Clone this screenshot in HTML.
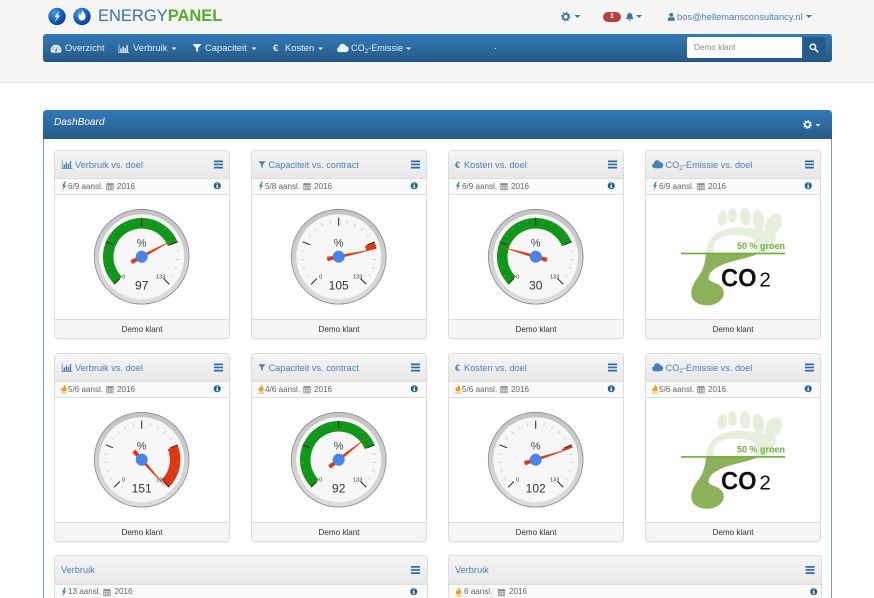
<!DOCTYPE html>
<html lang="nl"><head><meta charset="utf-8"><title>EnergyPanel</title>
<style>
html,body{margin:0;padding:0;background:#fff;width:874px;height:598px;overflow:hidden}
#wrap{position:absolute;left:0;top:0;width:874px;height:598px;overflow:hidden;font-family:"Liberation Sans",sans-serif;color:#333}
.a{position:absolute}
.t{position:absolute;white-space:nowrap;line-height:12px;height:12px}
.top{left:0;top:0;width:874px;height:82px;background:#f5f5f5;border-bottom:1px solid #e7e7e7}
.nav{left:43px;top:34px;width:789px;height:28px;border-radius:3px;background:linear-gradient(#337ab7,#265a88);border-bottom:1px solid #1f4f7a;box-sizing:border-box}
.n{color:#e6eef6;font-size:9.4px}
.panel{left:43px;top:110px;width:789px;height:488px;border:1px solid #6f9fcb;border-bottom:0;border-radius:4px 4px 0 0;box-sizing:border-box;background:#fff}
.ph{left:43px;top:110px;width:789px;height:29px;border-radius:4px 4px 0 0;background:linear-gradient(#337ab7,#265a88)}
.card{position:absolute;width:176px;height:189px;border:1px solid #ddd;border-radius:4px;box-sizing:border-box;background:#fff;overflow:hidden;box-shadow:0 1px 1px rgba(0,0,0,.05)}
.wide{width:374px;height:43px;border-bottom:0;border-radius:4px 4px 0 0;box-shadow:none}
.h{position:absolute;left:0;top:0;right:0;height:27px;background:linear-gradient(#f5f5f5,#e8e8e8);border-bottom:1px solid #ddd}
.s{position:absolute;left:0;top:28px;right:0;height:15px;background:#fafafa;border-bottom:1px solid #ddd}
.f{position:absolute;left:0;bottom:0;right:0;height:18px;background:#f5f5f5;border-top:1px solid #ddd;text-align:center;font-size:8.1px;line-height:19px;color:#333}
.ti{color:#4a80b5;font-size:9.2px}
.su{color:#666;font-size:8.1px;margin-top:.5px}
sub{font-size:70%;line-height:0;vertical-align:-2px}
svg text{font-family:"Liberation Sans",sans-serif}
</style></head><body><div id="wrap">
<div class="a top"></div>
<div class="a nav"></div>
<div class="a" style="left:687px;top:37px;width:115px;height:21px;background:#fff;border-radius:2px 0 0 2px"></div>
<div class="a" style="left:803px;top:37px;width:23px;height:21px;background:#265a88;border:1px solid #2a5f90;box-sizing:border-box;border-radius:0 3px 3px 0"></div>
<div class="t" style="left:694px;top:42px;font-size:8.2px;color:#888">Demo klant</div>
<div class="a" style="left:495px;top:48px;width:1px;height:1px;background:#fff"></div>

<div class="t" style="left:98px;top:6px;height:20px;line-height:20px;font-size:16.5px;color:#3a70ab">ENERGY<b style="color:#5aaa2e">PANEL</b></div>

<div class="a" style="left:603px;top:12px;width:18px;height:10px;border-radius:5px;background:#b94040;color:#fff;font-size:7px;font-weight:bold;line-height:10px;text-align:center">1</div>
<div class="t" style="left:677px;top:11px;font-size:9.35px;color:#4a80b5">bos@hellemansconsultancy.nl</div>

<div class="t n" style="left:65px;top:42px">Overzicht</div>
<div class="t n" style="left:133px;top:42px">Verbruik</div>
<div class="t n" style="left:205px;top:42px">Capaciteit</div>
<div class="t n" style="left:273px;top:42px;font-weight:bold">€</div>
<div class="t n" style="left:285px;top:42px">Kosten</div>
<div class="t n" style="left:351px;top:42px;font-size:9.1px">CO<sub>2</sub>-Emissie</div>

<div class="a panel"></div>
<div class="a ph"></div>
<div class="t" style="left:54px;top:117px;font-size:10.1px;font-style:italic;color:#fff">DashBoard</div>

<div class="card" style="left:54px;top:150px"><div class="h"></div><div class="s"></div><div class="f">Demo klant</div></div>
<div class="card" style="left:251px;top:150px"><div class="h"></div><div class="s"></div><div class="f">Demo klant</div></div>
<div class="card" style="left:448px;top:150px"><div class="h"></div><div class="s"></div><div class="f">Demo klant</div></div>
<div class="card" style="left:645px;top:150px"><div class="h"></div><div class="s"></div><div class="f">Demo klant</div></div>
<div class="card" style="left:54px;top:353px"><div class="h"></div><div class="s"></div><div class="f">Demo klant</div></div>
<div class="card" style="left:251px;top:353px"><div class="h"></div><div class="s"></div><div class="f">Demo klant</div></div>
<div class="card" style="left:448px;top:353px"><div class="h"></div><div class="s"></div><div class="f">Demo klant</div></div>
<div class="card" style="left:645px;top:353px"><div class="h"></div><div class="s"></div><div class="f">Demo klant</div></div>
<div class="card wide" style="left:54px;top:555px"><div class="h" style="height:28px"></div><div class="s" style="top:29px;height:14px;border-bottom:0"></div></div>
<div class="card wide" style="left:448px;top:555px"><div class="h" style="height:28px"></div><div class="s" style="top:29px;height:14px;border-bottom:0"></div></div>

<div class="t ti" style="left:75px;top:158.500px">Verbruik vs. doel</div>
<div class="t ti" style="left:268.500px;top:158.500px">Capaciteit vs. contract</div>
<div class="t ti" style="left:455px;top:158.500px;font-weight:bold">€</div>
<div class="t ti" style="left:464px;top:158.500px">Kosten vs. doel</div>
<div class="t ti" style="left:665.500px;top:158.500px">CO<sub>2</sub>-Emissie vs. doel</div>
<div class="t ti" style="left:75px;top:361.500px">Verbruik vs. doel</div>
<div class="t ti" style="left:268.500px;top:361.500px">Capaciteit vs. contract</div>
<div class="t ti" style="left:455px;top:361.500px;font-weight:bold">€</div>
<div class="t ti" style="left:464px;top:361.500px">Kosten vs. doel</div>
<div class="t ti" style="left:665.500px;top:361.500px">CO<sub>2</sub>-Emissie vs. doel</div>
<div class="t ti" style="left:61px;top:564px">Verbruik</div>
<div class="t ti" style="left:455px;top:564px">Verbruik</div>

<div class="t su" style="left:68px;top:180px">6/9 aansl.</div><div class="t su" style="left:117px;top:180px">2016</div>
<div class="t su" style="left:265px;top:180px">5/8 aansl.</div><div class="t su" style="left:314px;top:180px">2016</div>
<div class="t su" style="left:462px;top:180px">6/9 aansl.</div><div class="t su" style="left:511px;top:180px">2016</div>
<div class="t su" style="left:659px;top:180px">6/9 aansl.</div><div class="t su" style="left:708px;top:180px">2016</div>
<div class="t su" style="left:68px;top:383px">5/6 aansl.</div><div class="t su" style="left:117px;top:383px">2016</div>
<div class="t su" style="left:265px;top:383px">4/6 aansl.</div><div class="t su" style="left:314px;top:383px">2016</div>
<div class="t su" style="left:462px;top:383px">5/6 aansl.</div><div class="t su" style="left:511px;top:383px">2016</div>
<div class="t su" style="left:659px;top:383px">5/6 aansl.</div><div class="t su" style="left:708px;top:383px">2016</div>
<div class="t su" style="left:68px;top:585.500px;height:12px">13 aansl.</div><div class="t su" style="left:114.500px;top:585.500px">2016</div>
<div class="t su" style="left:464px;top:585.500px">6 aansl.</div><div class="t su" style="left:509px;top:585.500px">2016</div>

<svg class="a" style="left:0;top:0" width="874" height="598" viewBox="0 0 874 598">
<defs>
<radialGradient id="ball" cx=".35" cy=".3" r=".9"><stop offset="0" stop-color="#4d9be8"/><stop offset=".55" stop-color="#1058b8"/><stop offset="1" stop-color="#0a2f78"/></radialGradient>
<linearGradient id="ringg" x1="0" y1="0" x2="0" y2="1"><stop offset="0" stop-color="#c4c4c4"/><stop offset="1" stop-color="#dcdcdc"/></linearGradient>
<symbol id="gear" viewBox="0 0 16 16"><circle cx="8" cy="8" r="4.600" fill="none" stroke="currentColor" stroke-width="3"/><circle cx="8" cy="8" r="6.800" fill="none" stroke="currentColor" stroke-width="2.400" stroke-dasharray="2.600 2.740"/></symbol>
<symbol id="bell" viewBox="0 0 16 16"><path fill="currentColor" d="M8 .8a1.200 1.200 0 0 1 1.200 1.300c2.400.6 3.400 2.600 3.400 5 0 2.300.6 3.400 2.200 4.900H1.200c1.600-1.500 2.200-2.600 2.200-4.900 0-2.400 1-4.400 3.400-5A1.200 1.200 0 0 1 8 .8zM6 13h4a2 2 0 0 1-4 0z"/></symbol>
<symbol id="user" viewBox="0 0 16 16"><circle cx="8" cy="4.300" r="3.700" fill="currentColor"/><path fill="currentColor" d="M1.500 15.500c-.3-5 1.500-7 4-7 .8.600 1.600.9 2.500.9s1.700-.3 2.500-.9c2.500 0 4.300 2 4 7z"/></symbol>
<symbol id="search" viewBox="0 0 16 16"><circle cx="6.500" cy="6.500" r="4.500" fill="none" stroke="currentColor" stroke-width="2.600"/><path d="M10 10l4.500 4.500" stroke="currentColor" stroke-width="3" stroke-linecap="round"/></symbol>
<symbol id="dash" viewBox="0 0 16 16"><path fill="currentColor" d="M8 2.500A7.800 7.800 0 0 0 .2 10.300c0 1.400.4 2.600 1 3.700h13.600c.6-1.100 1-2.300 1-3.700A7.800 7.800 0 0 0 8 2.500z"/><circle cx="8" cy="11" r="1.500" fill="#2f6ea6"/><path d="M8 11L10.500 5.500" stroke="#2f6ea6" stroke-width="1"/><circle cx="3.500" cy="9.500" r=".9" fill="#2f6ea6"/><circle cx="5" cy="6" r=".9" fill="#2f6ea6"/><circle cx="12.500" cy="9.500" r=".9" fill="#2f6ea6"/></symbol>
<symbol id="chart" viewBox="0 0 16 16"><path fill="currentColor" d="M.500 2h1v11.500H16v1H.500zM3 8h2v5H3zM6 5h2v8H6zM9 7h2v6H9zM12 3h2v10h-2z"/></symbol>
<symbol id="filter" viewBox="0 0 16 16"><path fill="currentColor" d="M.800 1.500h14.400L9.700 8.300v6.500L6.300 12.500V8.300z"/></symbol>
<symbol id="cloud" viewBox="0 0 16 16"><path fill="currentColor" d="M3.800 13.500a3.500 3.500 0 0 1-.9-6.900A4.400 4.400 0 0 1 11.300 5a4.300 4.300 0 0 1 .9 8.500z"/></symbol>
<symbol id="bolt" viewBox="0 0 8 14"><path fill="currentColor" d="M5 0L.8 7.500h2.600L1.800 14l5.400-8.200H4.500L6.800 0z"/></symbol>
<symbol id="cal" viewBox="0 0 12 12"><path fill="#8a8a8a" d="M.500 1.500h2V.500h1.200v1h4.600v-1h1.200v1h2V12H.500z"/><path fill="#fafafa" d="M1.500 4.500h1.800v1.500H1.500zM4.100 4.500h1.700v1.500H4.100zM6.500 4.500h1.700v1.500H6.500zM8.900 4.500h1.700v1.500H8.900zM1.500 7h1.800v1.500H1.500zM4.100 7h1.700v1.500H4.100zM6.500 7h1.700v1.500H6.500zM8.900 7h1.700v1.500H8.900zM1.500 9.400h1.800v1.500H1.500zM4.100 9.400h1.700v1.500H4.100zM6.500 9.400h1.700v1.500H6.500zM8.900 9.400h1.700v1.500H8.900z"/></symbol>
<symbol id="info" viewBox="0 0 16 16"><circle cx="8" cy="8" r="7.500" fill="#1f5f8b"/><rect x="6.800" y="2.800" width="2.600" height="2.400" fill="#fff"/><path fill="#fff" d="M5.800 6.500h3.600v5h1v1.500H5.800v-1.500h1v-3.500h-1z"/></symbol>
<symbol id="menu" viewBox="0 0 9 8"><path fill="#2b6ca8" d="M0 0h9v1.700H0zM0 3.100h9v1.700H0zM0 6.300h9V8H0z"/></symbol>
<symbol id="fire" viewBox="0 0 8 12"><path fill="#f09a1a" d="M4.500 0c.5 2 3 3.500 3 6.200C7.500 8.300 6 9.500 4 9.500S.500 8.300.500 6.300C.500 5 1.200 4 2 3.500c0 1 .4 1.600 1 1.800C3.500 3.500 3.500 1.500 4.500 0z"/><rect y="10.600" width="8" height="1.400" fill="#f0b45a"/></symbol>
<g id="ticks">
<g stroke="#999" stroke-width=".5" opacity=".75">
<path d="M0-37.500V-34.500" transform="rotate(-121.500)"/><path d="M0-37.500V-34.500" transform="rotate(-108)"/><path d="M0-37.500V-34.500" transform="rotate(-94.500)"/><path d="M0-37.500V-34.500" transform="rotate(-81)"/>
<path d="M0-37.500V-34.500" transform="rotate(-54)"/><path d="M0-37.500V-34.500" transform="rotate(-40.500)"/><path d="M0-37.500V-34.500" transform="rotate(-27)"/><path d="M0-37.500V-34.500" transform="rotate(-13.500)"/>
<path d="M0-37.500V-34.500" transform="rotate(13.500)"/><path d="M0-37.500V-34.500" transform="rotate(27)"/><path d="M0-37.500V-34.500" transform="rotate(40.500)"/><path d="M0-37.500V-34.500" transform="rotate(54)"/>
<path d="M0-37.500V-34.500" transform="rotate(81)"/><path d="M0-37.500V-34.500" transform="rotate(94.500)"/><path d="M0-37.500V-34.500" transform="rotate(108)"/><path d="M0-37.500V-34.500" transform="rotate(121.500)"/>
</g>
<g stroke="#222" stroke-width="1">
<path d="M0-39V-31" transform="rotate(-135)"/><path d="M0-39V-31" transform="rotate(-67.500)"/><path d="M0-39V-31"/><path d="M0-39V-31" transform="rotate(67.500)"/><path d="M0-39V-31" transform="rotate(135)"/>
</g>
</g>
<g id="ring"><circle r="47.800" fill="#8a8a8a"/><circle r="47" fill="url(#ringg)"/><circle r="42.500" fill="#f7f7f7"/></g>
<g id="needle"><path d="M-2.300 11.500L0-37.500 2.300 11.500 0 12z" fill="#dc5a3a"/><path d="M-1.200 11L0-37.500 1.200 11z" fill="#dc3912"/></g>
<g id="ball2"><circle r="5.800" fill="#4684ee" stroke="#5a7fb5" stroke-width=".5"/></g>
</defs>

<!-- logo -->
<circle cx="57" cy="16.500" r="10" fill="#fff"/><circle cx="57" cy="16.500" r="8.700" fill="url(#ball)"/>
<path d="M59.500 10.500L54.500 17h2.500L54.500 22.500l5.500-7H57.500z" fill="#fff"/>
<circle cx="82" cy="16.500" r="10" fill="#fff"/><circle cx="82" cy="16.500" r="8.700" fill="url(#ball)"/>
<path d="M82.500 10c.3 2 3 3.500 3 6.500 0 2.500-1.500 4-3.500 4s-3.500-1.500-3.500-3.800c0-1.500.7-2.500 1.500-3.200.1 1 .4 1.500.9 1.800.3-1.800.8-3.800 1.600-5.300z" fill="#fff"/>

<!-- top right -->
<g color="#3b76b0"><use href="#gear" x="561" y="12" width="9.500" height="9.500"/><use href="#bell" x="625" y="12" width="9.500" height="9.500"/><use href="#user" x="667" y="12" width="8.500" height="9.500"/></g>
<g fill="#3b76b0"><path d="M574.500 15h6l-3 3zM636 15h6l-3 3zM806 15h6l-3 3z"/></g>

<!-- nav icons -->
<g color="#eef3f8">
<use href="#dash" x="50.500" y="43" width="11" height="11"/><use href="#chart" x="118" y="43" width="11.500" height="11"/><use href="#filter" x="192" y="43" width="10" height="10"/><use href="#cloud" x="337" y="42" width="12" height="12"/>
<use href="#search" x="809" y="43" width="9.500" height="9.500"/><use href="#gear" x="803" y="120" width="9" height="9"/>
</g>
<g fill="#eef3f8"><path d="M171.500 47.500h5l-2.500 2.500zM251.500 47.500h5l-2.500 2.500zM318 47.500h5l-2.500 2.500zM406 47.500h5l-2.500 2.500zM815.500 124h5l-2.500 2.500z"/></g>

<!-- card header icons -->
<g color="#4a80b5"><use href="#chart" x="61.500" y="159" width="11" height="11"/><use href="#filter" x="258" y="160" width="8" height="9"/><use href="#cloud" x="652" y="158.500" width="11.500" height="11.500"/><use href="#chart" x="61.500" y="362" width="11" height="11"/><use href="#filter" x="258" y="363" width="8" height="9"/><use href="#cloud" x="652" y="361.500" width="11.500" height="11.500"/></g>
<use href="#menu" x="214" y="160.500" width="9" height="8"/><use href="#menu" x="411" y="160.500" width="9" height="8"/><use href="#menu" x="608" y="160.500" width="9" height="8"/><use href="#menu" x="805" y="160.500" width="9" height="8"/>
<use href="#menu" x="214" y="363.500" width="9" height="8"/><use href="#menu" x="411" y="363.500" width="9" height="8"/><use href="#menu" x="608" y="363.500" width="9" height="8"/><use href="#menu" x="805" y="363.500" width="9" height="8"/>
<use href="#menu" x="411" y="566" width="9" height="8"/><use href="#menu" x="805.500" y="566" width="9" height="8"/>

<!-- sub icons -->
<g color="#2f7fd0"><use href="#bolt" x="61.500" y="181" width="5" height="10"/><use href="#bolt" x="258.500" y="181" width="5" height="10"/><use href="#bolt" x="455.500" y="181" width="5" height="10"/><use href="#bolt" x="652.500" y="181" width="5" height="10"/><use href="#bolt" x="61.500" y="587" width="5" height="10"/></g>
<use href="#fire" x="61" y="384" width="6" height="10"/><use href="#fire" x="258" y="384" width="6" height="10"/><use href="#fire" x="455" y="384" width="6" height="10"/><use href="#fire" x="652" y="384" width="6" height="10"/><use href="#fire" x="455.500" y="587" width="6" height="10"/>
<use href="#cal" x="106" y="182" width="8" height="8.500"/><use href="#cal" x="303" y="182" width="8" height="8.500"/><use href="#cal" x="500" y="182" width="8" height="8.500"/><use href="#cal" x="697" y="182" width="8" height="8.500"/>
<use href="#cal" x="106" y="385" width="8" height="8.500"/><use href="#cal" x="303" y="385" width="8" height="8.500"/><use href="#cal" x="500" y="385" width="8" height="8.500"/><use href="#cal" x="697" y="385" width="8" height="8.500"/>
<use href="#cal" x="103" y="588" width="8" height="8.500"/><use href="#cal" x="497.500" y="588" width="8" height="8.500"/>
<use href="#info" x="213.500" y="182" width="7.500" height="7.500"/><use href="#info" x="410.500" y="182" width="7.500" height="7.500"/><use href="#info" x="607.500" y="182" width="7.500" height="7.500"/><use href="#info" x="804.500" y="182" width="7.500" height="7.500"/>
<use href="#info" x="213.500" y="385" width="7.500" height="7.500"/><use href="#info" x="410.500" y="385" width="7.500" height="7.500"/><use href="#info" x="607.500" y="385" width="7.500" height="7.500"/><use href="#info" x="804.500" y="385" width="7.500" height="7.500"/>
<use href="#info" x="410" y="588" width="7.500" height="7.500"/><use href="#info" x="810" y="588" width="7.500" height="7.500"/>

<!-- gauges -->
<g transform="translate(141.700,256.700)"><use href="#ring"/>
<path d="M-23.700 23.700A33.500 33.500 0 1 1 31.060-12.550" fill="none" stroke="#109618" stroke-width="10.500"/><use href="#ticks"/>
<text x="-18" y="22" font-size="5.500" fill="#333" text-anchor="middle">0</text><text x="19" y="22" font-size="5.500" fill="#333" text-anchor="middle">133</text>
<text y="-10" font-size="11" fill="#444" text-anchor="middle">%</text><text y="33" font-size="12" fill="#333" text-anchor="middle">97</text>
<use href="#needle" transform="rotate(61.900)"/><use href="#ball2"/></g>

<g transform="translate(338.700,256.700)"><use href="#ring"/>
<path d="M31.060-12.550A33.500 33.500 0 0 1 32.800-6.900" fill="none" stroke="#dc3912" stroke-width="10.500"/><use href="#ticks"/>
<text x="-18" y="22" font-size="5.500" fill="#333" text-anchor="middle">0</text><text x="19" y="22" font-size="5.500" fill="#333" text-anchor="middle">133</text>
<text y="-10" font-size="11" fill="#444" text-anchor="middle">%</text><text y="33" font-size="12" fill="#333" text-anchor="middle">105</text>
<use href="#needle" transform="rotate(78.200)"/><use href="#ball2"/></g>

<g transform="translate(535.700,256.700)"><use href="#ring"/>
<path d="M-23.700 23.700A33.500 33.500 0 1 1 31.060-12.550" fill="none" stroke="#109618" stroke-width="10.500"/><use href="#ticks"/>
<text x="-18" y="22" font-size="5.500" fill="#333" text-anchor="middle">0</text><text x="19" y="22" font-size="5.500" fill="#333" text-anchor="middle">133</text>
<text y="-10" font-size="11" fill="#444" text-anchor="middle">%</text><text y="33" font-size="12" fill="#333" text-anchor="middle">30</text>
<use href="#needle" transform="rotate(-74.100)"/><use href="#ball2"/></g>

<g transform="translate(141.700,459.700)"><use href="#ring"/>
<path d="M31.060-12.550A33.500 33.500 0 0 1 23.700 23.700" fill="none" stroke="#dc3912" stroke-width="10.500"/><use href="#ticks"/>
<text x="-18" y="22" font-size="5.500" fill="#333" text-anchor="middle">0</text><text x="19" y="22" font-size="5.500" fill="#333" text-anchor="middle">133</text>
<text y="-10" font-size="11" fill="#444" text-anchor="middle">%</text><text y="33" font-size="12" fill="#333" text-anchor="middle">151</text>
<use href="#needle" transform="rotate(138)"/><use href="#ball2"/></g>

<g transform="translate(338.700,459.700)"><use href="#ring"/>
<path d="M-23.700 23.700A33.500 33.500 0 1 1 31.060-12.550" fill="none" stroke="#109618" stroke-width="10.500"/><use href="#ticks"/>
<text x="-18" y="22" font-size="5.500" fill="#333" text-anchor="middle">0</text><text x="19" y="22" font-size="5.500" fill="#333" text-anchor="middle">133</text>
<text y="-10" font-size="11" fill="#444" text-anchor="middle">%</text><text y="33" font-size="12" fill="#333" text-anchor="middle">92</text>
<use href="#needle" transform="rotate(51.800)"/><use href="#ball2"/></g>

<g transform="translate(535.700,459.700)"><use href="#ring"/>
<path d="M31.060-12.550A33.500 33.500 0 0 1 31.860-10.350" fill="none" stroke="#dc3912" stroke-width="10.500"/><use href="#ticks"/>
<text x="-18" y="22" font-size="5.500" fill="#333" text-anchor="middle">0</text><text x="19" y="22" font-size="5.500" fill="#333" text-anchor="middle">133</text>
<text y="-10" font-size="11" fill="#444" text-anchor="middle">%</text><text y="33" font-size="12" fill="#333" text-anchor="middle">102</text>
<use href="#needle" transform="rotate(72.100)"/><use href="#ball2"/></g>

<!-- CO2 footprints -->
<g id="co2" transform="translate(640,105) scale(.3333)">
<g fill="#e6eedd">
<ellipse cx="247" cy="340" rx="14" ry="23" transform="rotate(8 247 340)"/><ellipse cx="277" cy="331" rx="13" ry="23"/><ellipse cx="316" cy="335" rx="16" ry="27" transform="rotate(-5 316 335)"/><ellipse cx="355" cy="346" rx="17" ry="30" transform="rotate(-10 355 346)"/><ellipse cx="400" cy="358" rx="23" ry="34" transform="rotate(28 400 358)"/>
<path d="M198 447C200 400 232 372 285 368C340 364 395 382 410 392C402 425 385 447 355 447Z"/>
</g>
<path d="M222 447C216 420 226 396 268 391C305 386 345 396 352 418C354 432 348 442 342 447Z" fill="#fff"/>
<path d="M198 447C196 470 190 495 175 515C160 535 150 555 155 575C162 598 195 606 222 598C250 588 258 565 246 548C234 532 214 535 206 522C204 505 220 490 250 478C285 465 330 458 352 447Z" fill="#8db15a"/>
<rect x="123" y="443" width="312" height="5" fill="#6fb03a"/>
<text x="291" y="432" font-size="27" font-weight="bold" fill="#6fb03a" textLength="144" lengthAdjust="spacingAndGlyphs">50 % groen</text>
<text x="243" y="544" font-size="76" font-weight="bold" fill="#111" textLength="107" lengthAdjust="spacingAndGlyphs">CO</text>
<text x="358" y="544" font-size="62" fill="#111">2</text>
</g>
<use href="#co2" y="203.400"/>
</svg>
</div></body></html>
